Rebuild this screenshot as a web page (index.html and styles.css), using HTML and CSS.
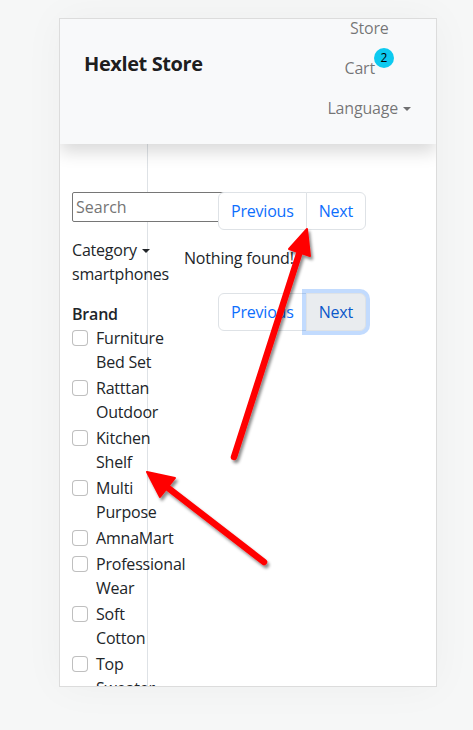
FILE: index.html
```html
<!DOCTYPE html>
<html lang="en">
<head>
<meta charset="utf-8">
<title>Hexlet Store</title>
<link rel="stylesheet" href="styles.css">
</head>
<body>
<div class="frame">
  <nav class="navbar">
    <a class="brand">Hexlet Store</a>
    <ul class="nav">
      <li><a class="nav-link">Store</a></li>
      <li><a class="nav-link cart">Cart<span class="badge">2</span></a></li>
      <li><a class="nav-link">Language<span class="caret"></span></a></li>
    </ul>
  </nav>
  <div class="content">
    <aside class="sidebar">
      <input class="search" type="text" placeholder="Search">
      <div class="category">Category<span class="caret dark"></span></div>
      <div class="category-value">smartphones</div>
      <div class="brand-title">Brand</div>
      <div class="check"><span class="box"></span><label>Furniture Bed Set</label></div>
      <div class="check"><span class="box"></span><label>Ratttan Outdoor</label></div>
      <div class="check"><span class="box"></span><label>Kitchen Shelf</label></div>
      <div class="check"><span class="box"></span><label>Multi Purpose</label></div>
      <div class="check"><span class="box"></span><label>AmnaMart</label></div>
      <div class="check"><span class="box"></span><label>Professional Wear</label></div>
      <div class="check"><span class="box"></span><label>Soft Cotton</label></div>
      <div class="check"><span class="box"></span><label>Top Sweater</label></div>
    </aside>
    <main class="main">
      <div class="pagination">
        <a class="page-link first">Previous</a>
        <a class="page-link last">Next</a>
      </div>
      <p class="empty">Nothing found!</p>
      <div class="pagination bottom">
        <a class="page-link first">Previous</a>
        <a class="page-link last focus">Next</a>
      </div>
    </main>
  </div>
</div>
<svg class="arrows" width="473" height="730" viewBox="0 0 473 730">
  <defs>
    <filter id="sh" x="-20%" y="-20%" width="140%" height="140%">
      <feDropShadow dx="2" dy="3" stdDeviation="1.6" flood-color="#000" flood-opacity="0.45"/>
    </filter>
  </defs>
  <g filter="url(#sh)" fill="#ff0000" stroke="#ff0000" stroke-linecap="round" stroke-linejoin="round">
    <line x1="234" y1="457" x2="301" y2="248" stroke-width="6.5"/>
    <polygon points="307,229 310,256 289,249" stroke-width="2"/>
    <line x1="264" y1="562" x2="163" y2="484" stroke-width="6.5"/>
    <polygon points="147,472 175,478 160,497" stroke-width="2"/>
  </g>
</svg>
</body>
</html>
```
FILE: styles.css
```css
* { box-sizing: border-box; }
html, body { margin: 0; padding: 0; }
body {
  background: #f6f7f7;
  font-family: "Open Sans", "Noto Sans", sans-serif;
  font-size: 16px;
  line-height: 24px;
  color: #212529;
  width: 473px;
  height: 730px;
  overflow: hidden;
  position: relative;
}
a { text-decoration: none; }
.frame {
  margin: 18px 0 0 59px;
  width: 378px;
  height: 669px;
  border: 1px solid #dcdcdc;
  background: #fff;
  overflow: hidden;
  display: flex;
  flex-direction: column;
  box-shadow: 0 0 40px rgba(0,0,0,0.04);
}
.navbar {
  flex: 0 0 125px;
  background: #f8f9fa;
  box-shadow: 0 8px 16px rgba(0,0,0,0.15);
  position: relative;
  z-index: 2;
  display: flex;
  justify-content: space-between;
  align-items: flex-start;
  padding: 0 25px 0 24px;
}
.brand {
  margin-top: 30px;
  font-size: 20px;
  line-height: 30px;
  font-weight: 700;
  color: rgba(0,0,0,0.9);
  letter-spacing: -0.4px;
}
.nav {
  list-style: none;
  margin: -11px 0 0 0;
  padding: 0;
  display: flex;
  flex-direction: column;
  align-items: center;
}
.nav li { height: 40px; display: flex; align-items: center; }
.nav-link {
  color: rgba(0,0,0,0.55);
  position: relative;
  letter-spacing: -0.2px;
}
.cart { margin-right: 19px; }
.badge {
  position: absolute;
  left: 100%;
  top: -8px;
  margin-left: -1px;
  width: 20px;
  height: 20px;
  border-radius: 50%;
  background: #0dcaf0;
  color: #000;
  font-size: 12px;
  line-height: 20px;
  text-align: center;
}
.caret {
  display: inline-block;
  margin-left: 5px;
  vertical-align: 3px;
  border-top: 4.5px solid rgba(0,0,0,0.55);
  border-left: 4.5px solid transparent;
  border-right: 4.5px solid transparent;
}
.caret.dark { border-top-color: #212529; }
.content {
  flex: 1;
  display: flex;
  min-height: 0;
}
.sidebar {
  flex: 0 0 88px;
  width: 88px;
  min-width: 0;
  border-right: 1px solid #dee2e6;
  padding: 48px 0 0 12px;
}
.search {
  display: block;
  width: 170px;
  height: 30px;
  margin: 0;
  padding: 1px 3px;
  border: 1px solid #767676;
  border-radius: 2px;
  font-family: inherit;
  font-size: 16px;
  color: #212529;
  background: #fff;
}
.search::placeholder { color: #757575; }
.category { margin-top: 16px; letter-spacing: -0.2px; white-space: nowrap; }
.category-value { letter-spacing: -0.2px; white-space: nowrap; }
.brand-title { margin-top: 16px; font-weight: 600; letter-spacing: -0.2px; white-space: nowrap; }
.check {
  display: flex;
  align-items: flex-start;
  margin-bottom: 2px;
  width: 96px;
}
.box {
  flex: 0 0 16px;
  height: 16px;
  margin-top: 4px;
  margin-right: 8px;
  border: 1px solid rgba(0,0,0,0.25);
  border-radius: 4px;
  background: #fff;
}
.check label {
  white-space: normal;
  width: 66px;
  flex: 0 0 66px;
  letter-spacing: -0.2px;
}
.main {
  flex: 1;
  min-width: 0;
  padding-top: 48px;
  display: flex;
  flex-direction: column;
  align-items: center;
}
.pagination {
  display: flex;
  position: relative;
  z-index: 1;
}
.page-link {
  display: block;
  padding: 6px 12px;
  line-height: 24px;
  color: #0d6efd;
  background: #fff;
  border: 1px solid #dee2e6;
  letter-spacing: -0.2px;
}
.page-link.first { border-radius: 6px 0 0 6px; }
.page-link.last { border-radius: 0 6px 6px 0; margin-left: -1px; }
.page-link.focus {
  background: #e9ecef;
  color: #0a58ca;
  box-shadow: 0 0 0 4px rgba(13,110,253,0.25);
  position: relative;
  z-index: 3;
}
.empty {
  align-self: flex-start;
  margin: 16px 0 0 36px;
  letter-spacing: -0.2px;
}
.pagination.bottom { margin-top: 23px; }
.arrows {
  position: absolute;
  left: 0;
  top: 0;
  pointer-events: none;
  z-index: 10;
}
```
